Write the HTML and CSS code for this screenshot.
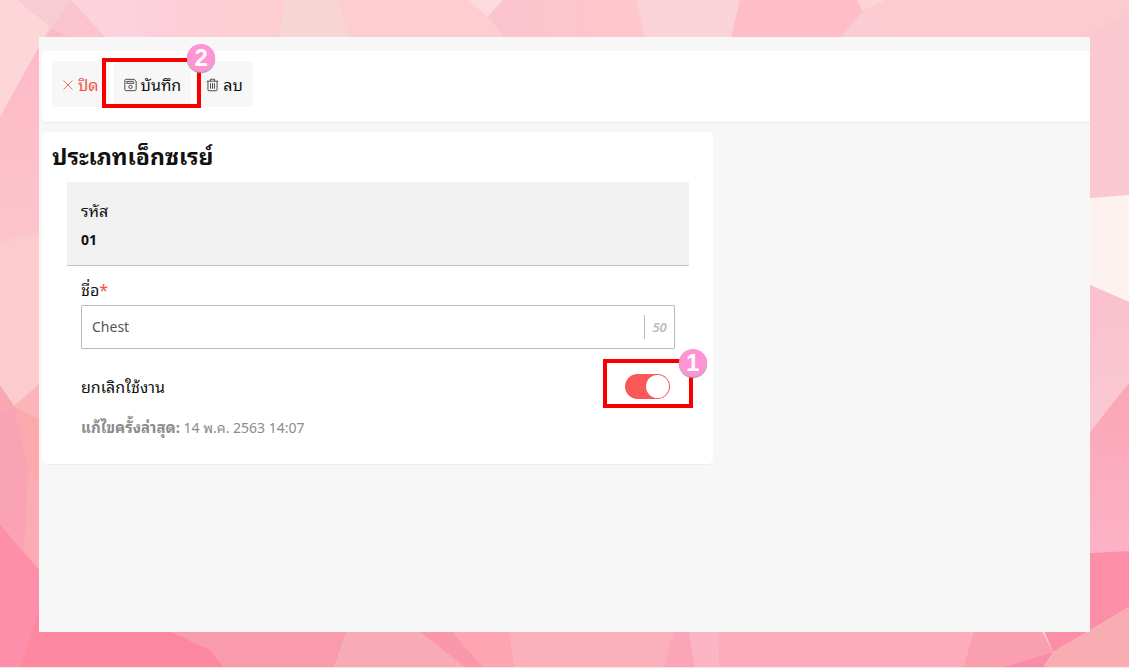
FILE: index.html
```
<!DOCTYPE html>
<html lang="th">
<head>
<meta charset="utf-8">
<meta name="viewport" content="width=device-width, initial-scale=1">
<title>ประเภทเอ็กซเรย์</title>
<link rel="stylesheet" href="styles.css">
</head>
<body>
<svg class="backdrop" viewBox="0 0 1129 668" preserveAspectRatio="none" aria-hidden="true">
  <defs>
    <linearGradient id="g1" x1="0" y1="0" x2="0" y2="1"><stop offset="0" stop-color="#fdb9c8"/><stop offset="1" stop-color="#fcc5ca"/></linearGradient>
    <linearGradient id="g2" x1="0" y1="0" x2="1" y2="0"><stop offset="0" stop-color="#fcd0dc"/><stop offset="1" stop-color="#fdcdd0"/></linearGradient>
    <linearGradient id="g3" x1="0" y1="0" x2="0" y2="1"><stop offset="0" stop-color="#faa6b6"/><stop offset="1" stop-color="#fdb2c6"/></linearGradient>
    <linearGradient id="g4" x1="0" y1="0" x2="0" y2="1"><stop offset="0" stop-color="#fbc0ce"/><stop offset="1" stop-color="#f9c9d3"/></linearGradient>
    <linearGradient id="g5" x1="0" y1="0" x2="1" y2="0"><stop offset="0" stop-color="#fbc3cf"/><stop offset="1" stop-color="#ffc7c9"/></linearGradient>
  </defs>
  <rect width="1129" height="668" fill="#fbc7d0"/>
  <path fill="#f7ccd3" d="M17 0H71L45 38 50 24Z"/>
  <path fill="#fdd6d9" d="M0 0H17L50 26 39 47 0 117Z"/>
  <path fill="#fbc3cd" d="M71 0 106 38H45Z"/>
  <path fill="#fdb9c8" d="M51 28 70 38H45Z"/>
  <path fill="#fcd3dc" d="M71 0H136L140 38H106Z"/>
  <path fill="url(#g2)" d="M136 0H284L279 38H140Z"/>
  <path fill="#f7d5d3" d="M284 0H339L350 38H279Z"/>
  <path fill="#fdcdd0" d="M339 0H467L488 17 505 38H350Z"/>
  <path fill="#fddade" d="M467 0H503L488 17Z"/>
  <path fill="url(#g5)" d="M503 0H636L645 38H505L488 17Z"/>
  <path fill="#fad2d9" d="M636 0H740L731 38H645Z"/>
  <path fill="#ffbdc8" d="M740 0H857L863 11 840 38H731Z"/>
  <path fill="#fdd3da" d="M857 0H887L863 11Z"/>
  <path fill="#f9cdd4" d="M863 11 895 38H840Z"/>
  <path fill="#fccacf" d="M887 0H1129V15L1073 38H895L863 11Z"/>
  <path fill="url(#g1)" d="M39 47V233L0 242V117Z"/>
  <path fill="#fccbce" d="M0 242 39 233V384L14 406 0 385Z"/>
  <path fill="#fbb5b9" d="M39 384V419L14 406Z"/>
  <path fill="#f9a8af" d="M0 385 14 406 0 412Z"/>
  <path fill="#fba9ad" d="M14 406 39 419V570L24 552Z"/>
  <path fill="#f9a3b5" d="M0 412 14 406 28 470 39 570 0 524Z"/>
  <path fill="#fbabb2" d="M28 470 39 480V570L24 552Z"/>
  <path fill="#fd8fab" d="M0 524 39 570V668H0Z"/>
  <path fill="#fef2f1" d="M1090 198 1129 195V302L1090 285Z"/>
  <path fill="url(#g4)" d="M1090 285 1129 302V383L1090 432Z"/>
  <path fill="url(#g3)" d="M1090 432 1129 383V551L1090 553Z"/>
  <path fill="#fd8ea7" d="M1090 553 1129 551V607L1053 652 1044 630H1090Z"/>
  <path fill="#fe87a0" d="M39 610V630H168L211 650 224 668H21Z"/>
  <path fill="#fa9bac" d="M168 630H347L334 668H224L211 650Z"/>
  <path fill="#f8abb5" d="M347 630H417L466 668H334Z"/>
  <path fill="#fa98aa" d="M417 630H451L484 668H466Z"/>
  <path fill="#ffa4b1" d="M451 630H509L515 668H484Z"/>
  <path fill="#fbb1bb" d="M509 630H674L663 668H515Z"/>
  <path fill="#fca5b8" d="M674 630H689L695 668H663Z"/>
  <path fill="#fbb5c4" d="M689 630H718L719 668H695Z"/>
  <path fill="#fcacba" d="M718 630H974L963 668H719Z"/>
  <path fill="#f99fb0" d="M974 630H1041L1053 652 998 668H963Z"/>
  <path fill="#fa8ca5" d="M1053 652 1043 668H998Z"/>
  <path fill="#f8adb3" d="M1053 652 1129 607V668H1043Z"/>
  <path fill="#f6e4e6" d="M0 667H1129V668H0Z"/>
</svg>

<main class="screen">
  <header class="toolbar">
    <button class="tool tool-close" type="button">
      <svg class="icon icon-small" viewBox="0 0 12 12" aria-hidden="true"><path d="M1.5 1.5 10.5 10.5M10.5 1.5 1.5 10.5"/></svg>
      <span>ปิด</span>
    </button>
    <div class="spot spot-save">
      <button class="tool" type="button">
        <svg class="icon" viewBox="0 0 14 14" aria-hidden="true"><path d="M2.4.9H10.8L13.1 3V11.6Q13.1 13.1 11.6 13.1H2.4Q.9 13.1.9 11.6V2.4Q.9.9 2.4.9ZM3 3.1H9.6Q10.6 3.1 10.6 4.1V5.2H3Z"/><circle cx="7" cy="9" r="1.8"/></svg>
        <span>บันทึก</span>
      </button>
      <span class="frame"><span class="badge">2</span></span>
    </div>
    <button class="tool" type="button">
      <svg class="icon" viewBox="0 0 14 14" aria-hidden="true"><path d="M.8 2.9H13.2M4.7 2.7V.8H9.3V2.7M2.1 3V12.1Q2.1 13.2 3.2 13.2H10.8Q11.9 13.2 11.9 12.1V3M4.9 5V11M7 5V11M9.1 5V11"/></svg>
      <span>ลบ</span>
    </button>
  </header>

  <form class="card">
    <h1 class="title">ประเภทเอ็กซเรย์</h1>
    <div class="fields">
      <div class="code">
        <span class="caption">รหัส</span>
        <strong>01</strong>
      </div>
      <div class="group">
        <label class="label caption" for="name">ชื่อ<span class="required">*</span></label>
        <div class="textbox">
          <input id="name" type="text" value="Chest" maxlength="50">
          <span class="limit">50</span>
        </div>
        <div class="toggle-row">
          <label class="caption" for="inactive">ยกเลิกใช้งาน</label>
          <div class="spot spot-switch">
            <input class="switch" id="inactive" type="checkbox" role="switch" checked>
            <span class="frame"><span class="badge">1</span></span>
          </div>
        </div>
        <p class="updated"><b>แก้ไขครั้งล่าสุด:</b> 14 พ.ค. 2563 14:07</p>
      </div>
    </div>
  </form>
</main>
</body>
</html>
```

FILE: styles.css
```
* {
  box-sizing: border-box;
}

body {
  display: flex;
  min-height: 100vh;
  margin: 0;
  padding: 37px 39px 36px;
  color: #111;
  font: 14px/20px "Noto Sans", Tahoma, "Noto Sans Thai Looped", Loma, Waree, "Noto Sans Thai", sans-serif;
}

button,
input {
  font: inherit;
  color: inherit;
}

.backdrop {
  position: fixed;
  inset: 0;
  z-index: -1;
  width: 100%;
  height: 100%;
}

.screen {
  flex: 1;
  min-width: 0;
  padding: 14px 0 14px 3px;
  background: #f7f7f7;
}

.toolbar {
  display: flex;
  gap: 5px;
  margin-bottom: 9px;
  padding: 10px 10px 15px;
  background: #fff;
  border-bottom: 1px solid #ececec;
  border-radius: 5px 0 0 5px;
}

.tool {
  display: flex;
  align-items: center;
  gap: 4px;
  height: 46px;
  padding: 2px 10px 0;
  font-size: 16px;
  white-space: nowrap;
  background: #f7f7f7;
  border: 0;
  border-radius: 3px;
}

.tool-close {
  color: #f0523f;
}

.icon {
  width: 13px;
  height: 14px;
  fill: none;
  stroke: currentColor;
  stroke-width: 1;
  opacity: 0.8;
}

.icon-small {
  width: 12px;
  height: 12px;
}

.spot {
  position: relative;
  display: flex;
}

.frame {
  position: absolute;
  border: 4px solid #f80000;
  pointer-events: none;
}

.spot-save .frame {
  inset: -3px -10px -1px -12px;
}

.spot-switch .frame {
  inset: -15px -23px -9px -22px;
}

.badge {
  position: absolute;
  top: -18px;
  right: -18px;
  width: 28px;
  height: 28px;
  border-radius: 50%;
  background: #ff94d4;
  box-shadow: 0 1px 1px #999;
  color: #fff;
  font: bold 24px/28px "Liberation Sans", Arial, sans-serif;
  text-align: center;
}

.spot-switch .badge {
  top: -14px;
}

.card {
  width: 64%;
  padding: 10px 24px 26px 10px;
  background: #fff;
  border-bottom: 1px solid #ececec;
  border-radius: 5px;
}

.title {
  margin: 0 0 12px;
  font-size: 23px;
  line-height: 28px;
}

.fields {
  padding-left: 15px;
}

.caption {
  font-size: 16px;
}

.code {
  display: flex;
  flex-direction: column;
  gap: 9px;
  padding: 19px 14px 15px;
  background: #f1f1f1;
  border-bottom: 1px solid #c4c4c4;
}

.group {
  padding: 14px 14px 0;
}

.label {
  display: block;
  margin-bottom: 5px;
}

.required {
  color: #f0523f;
}

.textbox {
  display: flex;
  align-items: center;
  height: 44px;
  padding: 0 7px 0 10px;
  border: 1px solid #bbb;
  border-radius: 1px;
}

.textbox input {
  flex: 1;
  min-width: 0;
  padding: 0;
  background: none;
  border: 0;
  outline: 0;
  color: #555;
}

.limit {
  padding-left: 7px;
  border-left: 1px solid #bbb;
  color: #bbb;
  font-size: 13px;
  font-style: italic;
  font-weight: 600;
  line-height: 24px;
}

.toggle-row {
  display: flex;
  align-items: center;
  justify-content: space-between;
  padding: 25px 5px 18px 0;
}

.switch {
  display: flex;
  justify-content: flex-end;
  width: 45px;
  height: 25px;
  margin: 0;
  padding: 1px;
  appearance: none;
  background: #fa5858;
  border-radius: 13px;
}

.switch::before {
  content: "";
  width: 23px;
  height: 23px;
  border-radius: 50%;
  background: #fff;
}

.updated {
  margin: 0;
  color: #8b8b8b;
}

.updated b {
  font-size: 15px;
}
```
